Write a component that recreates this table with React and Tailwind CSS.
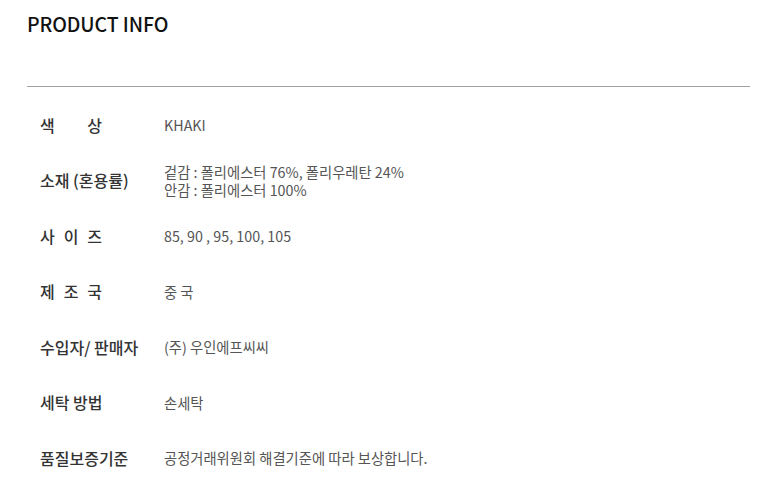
import React from "react";

const rows = [
    { label: "색상", spread: true, value: ["KHAKI"] },
    { label: "소재 (혼용률)", value: ["겉감 : 폴리에스터 76%, 폴리우레탄 24%", "안감 : 폴리에스터 100%"] },
    { label: "사이즈", spread: true, value: ["85, 90 , 95, 100, 105"] },
    { label: "제조국", spread: true, value: ["중 국"] },
    { label: "수입자/ 판매자", value: ["(주) 우인에프씨씨"] },
    { label: "세탁 방법", value: ["손세탁"] },
    { label: "품질보증기준", value: ["공정거래위원회 해결기준에 따라 보상합니다."] },
];

const App = () => {
    return (
        <div
            className="w-[780px] h-[488px] bg-white overflow-hidden"
            style={{ fontFamily: '"Noto Sans CJK KR", "Noto Sans", sans-serif' }}
        >
            <div className="pl-[27px] pr-[30px]">
                <h2 className="pt-[10px] text-[19.5px] font-medium text-[#111] leading-[28px] tracking-[-0.1px]">
                    PRODUCT INFO
                </h2>
                <div className="mt-[48px] border-t border-[#a0a0a0]" />
                <div className="pt-[10px]">
                    {rows.map((row) => (
                        <div key={row.label} className="flex items-center h-[55.5px]">
                            <div className="w-[137px] pl-[13px] text-[16px] font-medium text-[#333]">
                                {row.spread ? (
                                    <div className="flex justify-between w-[62px]">
                                        {row.label.split("").map((ch, i) => (
                                            <span key={i}>{ch}</span>
                                        ))}
                                    </div>
                                ) : (
                                    row.label
                                )}
                            </div>
                            <div className="flex flex-col gap-[1px] text-[14.3px] text-[#555] leading-[17px]">
                                {row.value.map((line) => (
                                    <div key={line}>{line}</div>
                                ))}
                            </div>
                        </div>
                    ))}
                </div>
            </div>
        </div>
    );
};

export default App;
